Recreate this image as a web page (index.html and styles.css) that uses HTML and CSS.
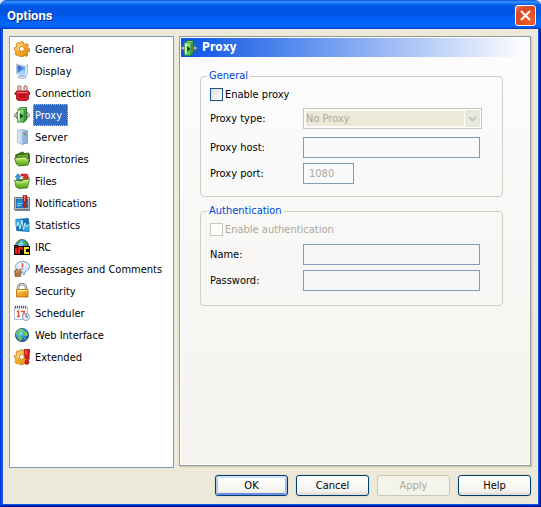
FILE: index.html
```html
<!DOCTYPE html>
<html lang="en">
<head>
<meta charset="utf-8">
<title>Options</title>
<link rel="stylesheet" href="styles.css">
</head>
<body>
<svg class="defs" width="0" height="0" aria-hidden="true">
  <defs>
    <linearGradient id="orange" x1="0" y1="0" x2="1" y2="1"><stop offset="0" stop-color="#ffe08a"/><stop offset=".5" stop-color="#f7a823"/><stop offset="1" stop-color="#d87c10"/></linearGradient>
    <linearGradient id="green" x1="0" y1="0" x2="1" y2="1"><stop offset="0" stop-color="#c4f4b0"/><stop offset="1" stop-color="#3cb044"/></linearGradient>
    <linearGradient id="folder" x1="0" y1="0" x2="0" y2="1"><stop offset="0" stop-color="#c8f070"/><stop offset="1" stop-color="#4c9c18"/></linearGradient>
    <linearGradient id="blue" x1="0" y1="0" x2="1" y2="1"><stop offset="0" stop-color="#1c50b8"/><stop offset="1" stop-color="#8cd0ff"/></linearGradient>
    <linearGradient id="steel" x1="0" y1="0" x2="1" y2="0"><stop offset="0" stop-color="#e4f0fc"/><stop offset="1" stop-color="#84acd8"/></linearGradient>
    <radialGradient id="globe" cx=".35" cy=".3" r=".8"><stop offset="0" stop-color="#a8e8ff"/><stop offset=".5" stop-color="#2c90dc"/><stop offset="1" stop-color="#0c3c8c"/></radialGradient>
    <symbol id="gear" viewBox="0 0 16 16">
      <path fill="url(#orange)" stroke="#c87414" stroke-width=".8" fill-rule="evenodd" d="M6.300.9h2.800l.5 1.900 1.300.6 1.800-.9 1.700 1.900-.9 1.600.5 1.200 1.600.7v2.500l-1.900.6-.5 1.200.8 1.700-1.900 1.600-1.600-1-1.200.5-.7 1.500H5.900l-.5-1.900-1.200-.6-1.700.7-1.500-1.900.9-1.600-.4-1.200L.4 9V6.600l1.700-.5.6-1.200L2 3.100l1.900-1.500 1.500.9zM7.800 5.400a2.500 2.500 0 1 0 .1 5 2.500 2.500 0 0 0-.1-5z"/>
      <path fill="none" stroke="#ffe6a0" d="M4.300 9A4 4 0 0 1 8 4.100"/>
    </symbol>
    <symbol id="proxy" viewBox="0 0 16 16">
      <path fill="#a0a0a0" stroke="#606060" stroke-width=".6" d="M.3 7h2V5.300H4v6H2.300V9.500h-2zM15.700 7h-2V5.300H12v6h1.700V9.500h2z"/>
      <path fill="#e4e4e4" d="M.5 7.500h3v1h-3zM12.500 7.500h3v1h-3z"/>
      <path fill="#3c9c3c" stroke="#1c6c20" stroke-width=".7" d="M4 2.500 6.500.5h6v12.500l-3 2.500z"/>
      <path fill="#8cdc80" d="M6.800 1h5.200l-1.800 1.500H5z"/>
      <path fill="url(#green)" stroke="#2c8c30" stroke-width=".6" d="M3.500 2.700H10v12.600H3.500z"/>
      <path fill="#e8ffe0" d="M4.300 4h1.200v9.500H4.300z"/>
      <path fill="#0c4c14" d="m6 6 3.500 3L6 12z"/>
    </symbol>
    <symbol id="bang" viewBox="0 0 16 16">
      <path fill="#f01818" stroke="#700808" stroke-width=".7" d="M10.500.5h5v3l-1 6.500h-3l-1-6.500z"/><circle cx="13" cy="13.200" r="2" fill="#f01818" stroke="#700808" stroke-width=".7"/><path fill="#ff9080" d="M11.500 1.500h1v4h-1z"/>
    </symbol>
  </defs>
</svg>
<main class="window">
  <header class="titlebar">
    <h1 class="title">Options</h1>
    <button class="close" type="button" aria-label="Close"><svg viewBox="0 0 19 19"><path d="m5 5 9 9M14 5l-9 9"/></svg></button>
  </header>
  <div class="client">
    <nav class="categories" aria-label="Categories">
      <a class="category" href="#"><svg class="icon"><use href="#gear"/></svg><span class="name">General</span></a>
      <a class="category" href="#"><svg class="icon" viewBox="0 0 16 16"><ellipse cx="8" cy="14" rx="4.500" ry="1.700" fill="#cfdcec" stroke="#9cb0c8" stroke-width=".6"/><path fill="#a8bcd8" d="m6 10 4 1v3H6z"/><path fill="#d8e8fa" stroke="#90a8cc" stroke-width=".7" d="M2.500 1 12 3.500l1.500-2v10L11 13l-8.500-2.500z"/><path fill="url(#blue)" d="m3.500 2.300 7.500 2v7.200L3.500 9.400z"/><path fill="#9ad4ff" d="m11 11.500-7-2 6-3z"/></svg><span class="name">Display</span></a>
      <a class="category" href="#"><svg class="icon" viewBox="0 0 16 16"><path fill="#f0dcdc" stroke="#803030" stroke-width=".8" d="M4 6.500V1.500L5.500.5 7 1.500v5zM10 6.500V1.500l1.500-1 1.500 1v5z"/><path fill="#d81c28" stroke="#8c0c14" stroke-width=".8" d="M2.500 6h12v1.500H16v2h-1.500v4.500L13 15.500H4L2.500 14V9.500H1v-2h1.500z"/><path fill="#f87078" d="M3.500 7h10v1h-10z"/><path fill="#940c14" d="M5 9.500h7v1H5zM5 11.500h7v1H5z"/></svg><span class="name">Connection</span></a>
      <a class="category selected" href="#" aria-current="page"><svg class="icon"><use href="#proxy"/></svg><span class="name">Proxy</span></a>
      <a class="category" href="#"><svg class="icon" viewBox="0 0 16 16"><path fill="#5c88bc" stroke="#7498c4" stroke-width=".7" d="m8 3 5.500-1v12L8 15.500z"/><path fill="url(#steel)" stroke="#8cacd0" stroke-width=".7" d="M3.500 1.500 8.500.5l5 1.500L9 3v12.500l-5.500-2z"/><path fill="#8eb4e0" d="M9 3.500 13 2.600v11L9 15z"/><path fill="#e83828" d="M9.500 4h2v1h-2z"/><path fill="#2cac30" d="M10.500 5.500h2v1h-2z"/></svg><span class="name">Server</span></a>
      <a class="category" href="#"><svg class="icon" viewBox="0 0 16 16"><path fill="#386f18" stroke="#285408" stroke-width=".8" d="M1.500 4 8.500 1l2 1.500 4-.5 1 2v7l-13 2z"/><path fill="#70a838" d="m3 4.500 11-1.500v5H4z"/><path fill="url(#folder)" stroke="#386f10" stroke-width=".8" d="M.5 7 11 6l1.500 1.500 3 .5-1.500 6-9 1-2.500-2z"/><path fill="none" stroke="#e4ffac" stroke-width=".8" d="m2 8 9-.8 1.500 1.300"/></svg><span class="name">Directories</span></a>
      <a class="category" href="#"><svg class="icon" viewBox="0 0 16 16"><path fill="#4c8820" d="M2 6h12v6H2z"/><path fill="#3c98dc" stroke="#1c6098" stroke-width=".5" d="M4 .6 7 4H5.300v4H2.700V4H1z"/><path fill="#e03030" stroke="#901010" stroke-width=".5" d="M7 1h5.500q1.500 0 1.500 2v1.500h1.500L12 8 8.500 4.500h2L9.500 3H7z"/><path fill="url(#folder)" stroke="#407c14" stroke-width=".8" d="m.5 7.500 7 1L9 7l6.500-1-2 9-8.500.5-3-1.500z"/><path fill="none" stroke="#e4ffac" stroke-width=".8" d="m2 8.600 6 .8 1.500-1.300 5-.8"/></svg><span class="name">Files</span></a>
      <a class="category" href="#"><svg class="icon" viewBox="0 0 16 16"><path fill="#dcdcd4" stroke="#74787c" d="M.5 2.500h15v12H.5z"/><path fill="#2484cc" stroke="#1c5890" stroke-width=".6" d="M2 4h12v9H2z"/><path stroke="#8cd8ff" d="M3 8.500h5M3 10.500h4"/><path fill="#808488" d="M1 15h15v1H1z"/><path fill="#e01c1c" stroke="#801010" stroke-width=".6" d="M9 .5h4l-.8 7.500H9.800z"/><circle cx="11" cy="10.500" r="1.800" fill="#e01c1c" stroke="#801010" stroke-width=".6"/><path fill="#ff9488" d="M10 1h1v5h-.6z"/></svg><span class="name">Notifications</span></a>
      <a class="category" href="#"><svg class="icon" viewBox="0 0 16 16"><path fill="#1874b4" d="M1.500 2 14.500 1l1 6v8l-13-1-1-6z"/><path fill="#38a4dc" d="M2 2.500 7 2v6H2zM10 9h5v5l-5-.5z"/><path fill="none" stroke="#c0f0ff" d="M1 9h2l1-4 2 7 2-9 1.500 10L11 6l1.500 4 1-2H16"/></svg><span class="name">Statistics</span></a>
      <a class="category" href="#"><svg class="icon" viewBox="0 0 16 16"><circle cx="8" cy="7" r="6.500" fill="url(#globe)" stroke="#183868" stroke-width=".7"/><path fill="#48a838" d="M3 3q2-2 4-2L6 4 3.500 6zM9 1.500l4 2v3L10 5z"/><path fill="#000" d="M0 6h4v1h12v9H0z"/><path fill="#f02418" d="M1 7h2v1H1zM1 9h2v6H1zM4 8h5v3H7v-1H6v5H4z"/><path fill="#ffe420" d="M10 8h5v2h-3v3h3v2h-5z"/></svg><span class="name">IRC</span></a>
      <a class="category" href="#"><svg class="icon" viewBox="0 0 16 16"><path fill="#d8ecff" stroke="#5c94cc" stroke-width=".9" d="M8.500.6c4 0 7 2 7 4.800 0 2.500-1.500 4-4 4.600L10 14 8 10.200c-4 0-6.500-2-6.500-4.700S4.500.6 8.500.6z"/><path fill="#fff" d="M8 1.500c3.500 0 5.500 1 6 3H3q1-2.500 5-3z"/><path stroke="#e83828" stroke-width="1.400" d="M8.500 2v4M8.500 7v1.300"/><path fill="#b07840" stroke="#744820" stroke-width=".5" d="M.5 9.500 3 8l1.500 1L7 8l-1 2 1.500 1-1 4.500H1z"/><path stroke="#e0ac74" d="m2 10 2 2M4 9l1 2"/></svg><span class="name">Messages and Comments</span></a>
      <a class="category" href="#"><svg class="icon" viewBox="0 0 16 16"><path fill="none" stroke="#707478" stroke-width="2.400" d="M4 8V5a4 4 0 0 1 8 0v3"/><path fill="none" stroke="#e4e8ec" d="M4 8V5a4 4 0 0 1 8 0v3"/><path fill="url(#orange)" stroke="#a86c04" stroke-width=".8" d="M2.500 6.500h11.500v7.500H2.500z"/><path fill="#fff0a0" d="M3 7h10.500v1H3z"/><path fill="#e8a41c" d="M3 10h10.500v1H3zM3 12h10.500v1H3z"/></svg><span class="name">Security</span></a>
      <a class="category" href="#"><svg class="icon" viewBox="0 0 16 16"><path fill="#fbfcff" stroke="#a0a8c0" stroke-width=".8" d="M.5 2h13v12.500H.5z"/><path fill="#dcdfe8" d="M1 2.500h12v2H1z"/><path stroke="#585c68" stroke-width="2.500" stroke-dasharray="1 1" d="M1 2h12"/><path fill="none" stroke="#e85020" stroke-width="1.300" d="m3 7 1.500-1v6M3 11.500h3M7 6.500h3.500L8.500 12"/><circle cx="12" cy="12" r="3.500" fill="#f2f6fc" stroke="#8090b0" stroke-width=".9"/><path fill="none" stroke="#384868" stroke-width=".9" d="M12 9.500V12h2"/></svg><span class="name">Scheduler</span></a>
      <a class="category" href="#"><svg class="icon" viewBox="0 0 16 16"><circle cx="8" cy="8" r="6.700" fill="url(#globe)" stroke="#184884" stroke-width=".7"/><path fill="#70cc48" d="M4 3q3-2 5-1L8 4 6 5v2L4 8 2 7zM10 4l3 1 1 3-2 1.500L10 8zM4.500 9 8 10l-.5 3-1.500 1-2-3zM10 11l2.500-.5L11 13z"/></svg><span class="name">Web Interface</span></a>
      <a class="category" href="#"><svg class="icon"><use href="#gear"/><use href="#bang"/></svg><span class="name">Extended</span></a>
    </nav>
    <form class="page">
      <h2 class="page-title"><svg class="icon"><use href="#proxy"/></svg>Proxy</h2>
      <div class="groups">
        <fieldset class="group">
          <legend>General</legend>
          <label class="check"><input type="checkbox">Enable proxy</label>
          <div class="row row-type">
            <label for="type">Proxy type:</label>
            <span class="select"><select id="type" disabled><option>No Proxy</option></select><svg class="arrow" viewBox="0 0 15 17"><path d="m4 7 3.500 3.500L11 7"/></svg></span>
          </div>
          <div class="row row-spaced"><label for="host">Proxy host:</label><input id="host" class="text" type="text" disabled></div>
          <div class="row"><label for="port">Proxy port:</label><input id="port" class="text short" type="text" value="1080" disabled></div>
        </fieldset>
        <fieldset class="group">
          <legend>Authentication</legend>
          <label class="check off"><input type="checkbox" disabled>Enable authentication</label>
          <div class="row row-spaced"><label for="user">Name:</label><input id="user" class="text" type="text" disabled></div>
          <div class="row"><label for="pass">Password:</label><input id="pass" class="text" type="password" disabled></div>
        </fieldset>
      </div>
    </form>
  </div>
  <footer class="actions">
    <button class="button default" type="button">OK</button>
    <button class="button" type="button">Cancel</button>
    <button class="button" type="button" disabled>Apply</button>
    <button class="button" type="button">Help</button>
  </footer>
</main>
</body>
</html>
```
FILE: styles.css
```css
* { box-sizing: border-box; }

body {
  margin: 0;
  background: #dfe8f8;
  color: #000;
  font: 11px/15px Tahoma, "DejaVu Sans Condensed", sans-serif;
}

input, select, button { font: inherit; color: inherit; }
.defs { position: absolute; }
.icon { flex: none; width: 16px; height: 16px; }

.window {
  display: flex;
  flex-direction: column;
  min-height: 100vh;
  padding: 0 3px 3px;
  background: #ece9d8;
  border-radius: 7px 7px 0 0;
  box-shadow: inset 1px 0 #0030d0, inset -1px -1px #00138c, inset -2px -2px #0028c0, inset 3px -3px #0855e8, inset -3px 0 #0855e8;
}

.titlebar {
  display: flex;
  align-items: center;
  justify-content: space-between;
  height: 29px;
  margin: 0 -3px;
  padding: 2px 5px 0 7px;
  border-radius: 7px 7px 0 0;
  background: linear-gradient(#0a50d8 0, #3c94ff 2px, #0c68f4 4px, #0056e4 7px, #0054e3 13px, #0062fa 20px, #0068ff 25px, #005cf0 27px, #0038c0 29px);
}
.title {
  margin: 0;
  color: #fff;
  font: bold 13px/18px "Trebuchet MS", Roboto, sans-serif;
  text-shadow: 1px 1px #0c2c84;
}
.close {
  width: 21px;
  height: 21px;
  padding: 0;
  border: 1px solid #fff;
  border-radius: 3px;
  background: radial-gradient(circle at 75% 75%, #f06030, #e04c20 50%, #d84828 70%, #e88870);
}
.close svg { display: block; width: 19px; height: 19px; fill: none; stroke: #fff; stroke-width: 2; }

.client {
  display: flex;
  flex: 1;
  gap: 5px;
  padding: 7px 7px 0 6px;
}
.categories {
  flex: none;
  width: 165px;
  margin-bottom: -2px;
  padding: 1px 4px;
  border: 1px solid #7f9db9;
  background: #fff;
}
.category {
  display: flex;
  align-items: center;
  gap: 3px;
  height: 22px;
  color: #000;
  text-decoration: none;
}
.name { padding: 4px 1px 3px; border: 1px solid transparent; line-height: 13px; white-space: nowrap; }
.selected .name {
  padding-right: 5px;
  border: 1px dotted #f0c060;
  background: #316ac5;
  color: #fff;
}

.page {
  flex: 1;
  min-width: 0;
  padding: 1px;
  border: 1px solid #919b9c;
  background: linear-gradient(#fcfcfe, #f4f3ee) content-box, #fff;
  box-shadow: 1px 1px #d0ceba, 2px 2px #e0deca;
}
.page-title {
  display: flex;
  align-items: center;
  gap: 5px;
  height: 19px;
  margin: 0;
  background: linear-gradient(90deg, #0854e4, #fcfcfe 98%);
  color: #fff;
  font: bold 12px/19px Tahoma, "DejaVu Sans Condensed", sans-serif;
}
.groups {
  display: grid;
  gap: 7px;
  padding: 12px 26px 0 19px;
}
.group {
  min-width: 0;
  margin: 0;
  padding: 5px 9px 12px;
  border: 1px solid #d0d0bf;
  border-radius: 4px;
}
.group:last-child { padding-bottom: 14px; }
.group legend { margin-left: -3px; padding: 0 2px; color: #0046d5; line-height: 14px; }
.check { display: flex; align-items: center; gap: 2px; height: 13px; }
.check input {
  width: 13px;
  height: 13px;
  margin: 0;
  appearance: none;
  border: 1px solid #1c5180;
  background: linear-gradient(135deg, #dcdcd7, #fff);
}
.check.off { color: #aca899; }
.check.off input { border-color: #cac8bb; background: #fff; }

.row {
  display: grid;
  grid-template-columns: 93px 1fr;
  align-items: center;
  margin-top: 5px;
  padding-right: 13px;
}
.row-type { margin-top: 7px; padding-right: 11px; }
.row-spaced { margin-top: 8px; }
.text {
  width: 100%;
  height: 21px;
  padding: 0 5px;
  border: 1px solid #7f9db9;
  border-radius: 0;
  background: transparent;
  color: #aca899;
}
.short { width: 51px; }
.select { position: relative; }
.select select {
  display: block;
  width: 100%;
  height: 21px;
  padding: 0 20px 0 2px;
  appearance: none;
  border: 1px solid #c9c7ba;
  border-radius: 0;
  background: #ece9d8;
  box-shadow: inset 0 0 0 2px #fbfbf8;
  color: #aca899;
  opacity: 1;
}
.arrow {
  position: absolute;
  top: 1px;
  right: 1px;
  width: 17px;
  height: 19px;
  border: 1px solid #fff;
  border-radius: 2px;
  background: #e8e8df;
  fill: none;
  stroke: #c6c5b8;
  stroke-width: 2;
}

.actions {
  display: flex;
  justify-content: flex-end;
  gap: 8px;
  padding: 9px 7px 8px;
}
.button {
  width: 73px;
  height: 21px;
  padding: 0;
  border: 1px solid #003c74;
  border-radius: 3px;
  background: linear-gradient(#fff, #f4f3ee 80%, #dcd8cc);
  box-shadow: 0 0 0 1px #e4e0d0;
}
.default { box-shadow: inset 0 2px #cee0fc, inset 2px 0 #b0c8f0, inset -2px 0 #a0bcee, inset 0 -2px #6c8ce4, 0 0 0 1px #e4e0d0; }
.button:disabled { border-color: #c9c7ba; background: #f5f4ea; color: #aca899; box-shadow: none; }
```
